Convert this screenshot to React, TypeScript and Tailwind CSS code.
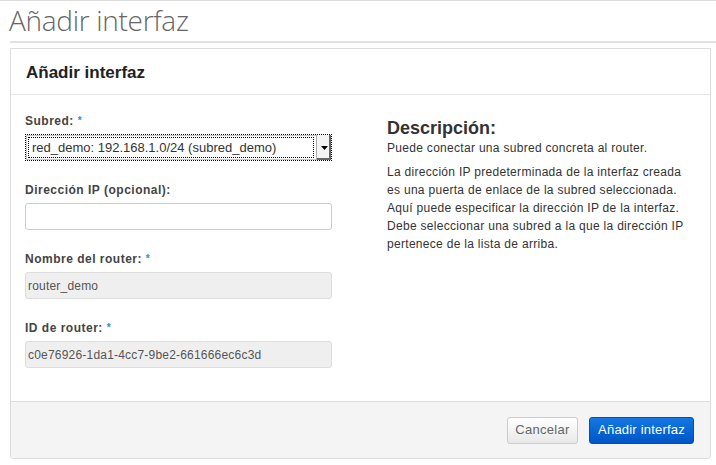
export default function App() {
    const fields = [
        { label: 'Nombre del router:', value: 'router_demo' },
        { label: 'ID de router:', value: 'c0e76926-1da1-4cc7-9be2-661666ec6c3d' },
    ];

    return (
        <div className="w-[716px] h-[465px] bg-white border-t border-[#ddd] font-['Liberation_Sans',Arial,sans-serif] overflow-hidden">
            {/* Page title */}
            <h1 className="pl-[9px] h-[40px] leading-[38px] text-[28px] text-[#666] font-['Open_Sans',sans-serif] font-light tracking-[-0.3px]">
                Añadir interfaz
            </h1>
            <div className="ml-[10px] h-[2px] bg-[#e2e2e2]" />

            {/* Modal */}
            <div className="mt-[5px] ml-[10px] w-[701px] border border-[#ddd] rounded-b-[3px]">
                <div className="h-[46px] border-b border-[#e6e6e6] pl-[15px] flex items-center">
                    <h2 className="text-[17px] font-bold text-[#222] pt-[2px]">Añadir interfaz</h2>
                </div>

                <div className="flex pt-[18px] pb-[33px] pl-[14px]">
                    {/* Form column */}
                    <div className="w-[307px] flex flex-col gap-[21px]">
                        <div>
                            <label className="block h-[16px] leading-[16px] mb-[5px] text-[12px] tracking-[0.5px] font-bold text-[#444]">
                                Subred: <span className="text-[#3a87c8] text-[10px] align-top">*</span>
                            </label>
                            <div className="h-[27px] flex border border-dotted border-black bg-white shadow-[inset_0_0_0_1px_#c8c8c8]">
                                <div className="flex-1 m-[2px] border border-dotted border-black flex items-center pl-[3px] text-[13px] text-[#333]">
                                    red_demo: 192.168.1.0/24 (subred_demo)
                                </div>
                                <div className="w-[15px] flex items-center justify-center border-l border-[#aaa] bg-[#f4f4f4] shadow-[inset_-2px_-2px_0_#666]">
                                    <svg width="7" height="4" viewBox="0 0 7 4"><path d="M0 0h7L3.5 4z" fill="#000" /></svg>
                                </div>
                            </div>
                        </div>
                        <div>
                            <label className="block h-[16px] leading-[16px] mb-[5px] text-[12px] tracking-[0.5px] font-bold text-[#444]">
                                Dirección IP (opcional):
                            </label>
                            <div className="h-[27px] border border-[#ccc] rounded-[3px] bg-white" />
                        </div>
                        {fields.map((f) => (
                            <div key={f.label}>
                                <label className="block h-[16px] leading-[16px] mb-[5px] text-[12px] tracking-[0.5px] font-bold text-[#444]">
                                    {f.label} <span className="text-[#3a87c8] text-[10px] align-top">*</span>
                                </label>
                                <div className="h-[27px] border border-[#ddd] rounded-[3px] bg-[#efefef] flex items-center pl-[2px] text-[12px] tracking-[0.2px] text-[#555]">
                                    {f.value}
                                </div>
                            </div>
                        ))}
                    </div>

                    {/* Description column */}
                    <div className="ml-[55px] w-[315px] pt-[4px]">
                        <h3 className="text-[18px] font-bold text-[#333] leading-[22px]">Descripción:</h3>
                        <p className="text-[12px] leading-[18px] tracking-[0.3px] text-[#333] mb-[6px]">
                            Puede conectar una subred concreta al router.
                        </p>
                        <p className="text-[12px] leading-[18px] tracking-[0.3px] text-[#333] w-[300px]">
                            La dirección IP predeterminada de la interfaz creada es una puerta de enlace de la subred seleccionada. Aquí puede especificar la dirección IP de la interfaz. Debe seleccionar una subred a la que la dirección IP pertenece de la lista de arriba.
                        </p>
                    </div>
                </div>

                {/* Footer */}
                <div className="h-[57px] border-t border-[#ddd] bg-[#f4f4f4] flex items-center justify-end gap-[11px] pr-[16px] rounded-b-[3px]">
                    <button className="h-[27px] w-[71px] rounded-[3px] border border-[#ccc] bg-gradient-to-b from-white to-[#e8e8e8] text-[13px] tracking-[0.3px] text-[#666]">
                        Cancelar
                    </button>
                    <button className="h-[27px] w-[105px] rounded-[3px] border border-[#0050b4] bg-gradient-to-b from-[#1478e4] to-[#0055c6] text-[13px] tracking-[0.2px] text-white">
                        Añadir interfaz
                    </button>
                </div>
            </div>
        </div>
    );
}
